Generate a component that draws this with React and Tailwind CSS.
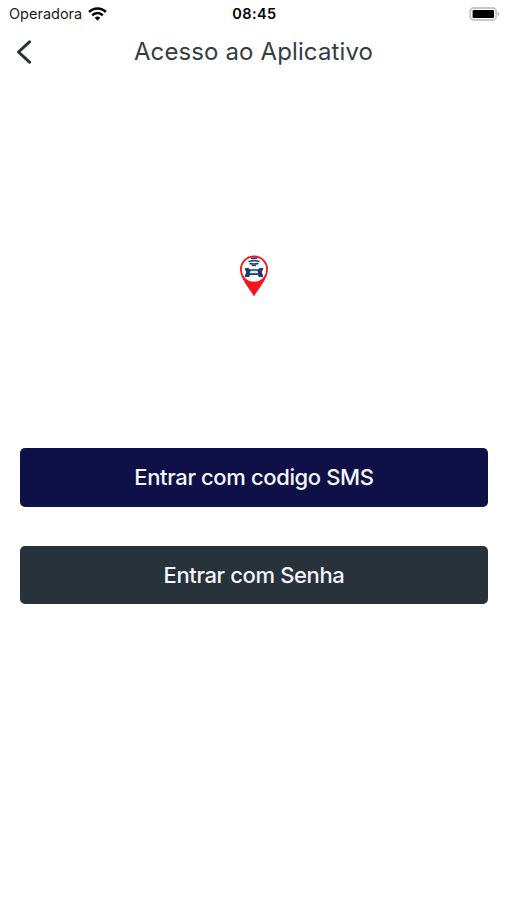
import React from "react";

function WifiIcon() {
  return (
    <svg width="19" height="14" viewBox="0 0 19 14" fill="none" stroke="#000" strokeWidth="2.5">
      <path d="M1.1 5a11.9 11.9 0 0 1 16.8 0" />
      <path d="M4.2 8.300a7.500 7.500 0 0 1 10.600 0" />
      <path d="M6.700 10.800a4 4 0 0 1 5.600 0L9.500 13.700z" fill="#000" stroke="none" />
    </svg>
  );
}

function BatteryIcon() {
  return (
    <svg width="31" height="14" viewBox="0 0 31 14">
      <rect x="1.2" y="1" width="26" height="12" rx="3.6" fill="#fff" stroke="#c8c8c8" strokeWidth="1.9" />
      <rect x="3.6" y="2.9" width="21.4" height="8.2" rx="1.2" fill="#000" />
      <path d="M28.6 5v4c.9-.3 1.6-1.1 1.6-2s-.7-1.7-1.6-2z" fill="#b5b5b5" />
    </svg>
  );
}

function PinLogo() {
  return (
    <svg width="30" height="42" viewBox="0 0 30 42">
      <path d="M15 41.5C12 35.5 1 23.5 1 14.5a14 14 0 0 1 28 0C29 23.5 18 35.5 15 41.5z" fill="#f5141e" />
      <circle cx="15" cy="14.5" r="12.2" fill="#fff" />
      <g fill="none" stroke="#1d3c6e">
        <path d="M12 3.3h6" strokeWidth="1.8" />
        <path d="M9.5 6.5q5.500-1.400 11 0" strokeWidth="1.4" />
        <path d="M10.5 8.5q4.500 1 9 0" strokeWidth="1.3" />
        <path d="M13 10.5h4" strokeWidth="1.3" />
      </g>
      <path
        d="M6 13h3.4l1.3 1.3h8.6l1.3-1.3H24v2.6h-1v3.6h1V22h-4l-1-2h-8l-1 2H6v-2.8h1v-3.6H6z"
        fill="#1d3c6e"
      />
      <path d="M11.5 15.7h7l.8 2.5h-8.6z" fill="#dfe6ef" />
    </svg>
  );
}

export default function App() {
  return (
    <div className="flex h-[900px] w-[507px] flex-col bg-white font-['Inter',sans-serif]">
      <div className="grid h-7 grid-cols-3 items-center pl-[9px] pr-[7px]">
        <div className="flex items-center gap-[6px] text-[14.5px] text-[#1b1b1b]">
          <span>Operadora</span>
          <WifiIcon />
        </div>
        <span className="text-center text-[14.5px] font-semibold tracking-[0.4px] text-black">08:45</span>
        <div className="flex justify-end">
          <BatteryIcon />
        </div>
      </div>

      <header className="grid h-12 grid-cols-[48px_1fr_48px] items-center">
        <button className="pl-4" aria-label="Voltar">
          <svg width="16" height="24" viewBox="0 0 16 24" fill="none" stroke="#263238" strokeWidth="3">
            <path d="M13.5 1.8 2.5 12l11 10.2" strokeLinecap="round" strokeLinejoin="round" />
          </svg>
        </button>
        <h1 className="text-center text-[24px] font-normal tracking-[0.12px] text-[#343d42]">Acesso ao Aplicativo</h1>
      </header>

      <main className="flex flex-col pl-[20.4px] pr-[19.4px] pt-[179px]">
        <div className="flex h-[193px] justify-center">
          <PinLogo />
        </div>
        <button className="h-[59px] rounded-[5px] bg-[#0f1047] text-[22px] font-medium tracking-[-0.37px] text-[#f5f6fb]">
          Entrar com codigo SMS
        </button>
        <button className="mt-[39px] h-[58px] rounded-[5px] bg-[#27323b] pt-px text-[22px] font-medium tracking-[-0.37px] text-[#f5f6fb]">
          Entrar com Senha
        </button>
      </main>
    </div>
  );
}
